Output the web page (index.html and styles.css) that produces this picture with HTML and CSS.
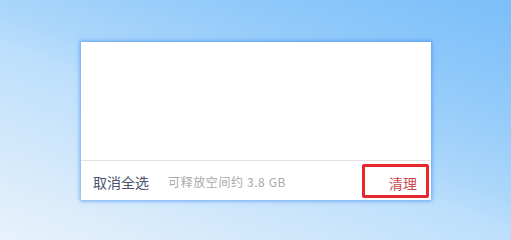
FILE: index.html
```html
<!DOCTYPE html>
<html lang="zh-CN">
<head>
    <meta charset="UTF-8">
    <meta name="viewport" content="width=device-width, initial-scale=1.0">
    <title>清理</title>
    <link rel="stylesheet" href="styles.css">
</head>
<body>

    <!-- 面板 -->
    <div class="panel">
        <div class="panel-body"></div>

        <!-- 底部操作栏 -->
        <div class="panel-footer">
            <span class="deselect">取消全选</span>
            <span class="space-info">可释放空间约 3.8 GB</span>
            <div class="clean-btn">清理</div>
        </div>
    </div>

</body>
</html>
```

FILE: styles.css
```css
body {
    margin: 0;
    width: 511px;
    height: 240px;
    overflow: hidden;
    padding: 42px 0 0 81px;
    box-sizing: border-box;
    font-family: 'Noto Sans CJK SC', 'Noto Sans', sans-serif;
    background:
        linear-gradient(200deg, rgba(118, 188, 249, 0.9) 0%, rgba(118, 188, 249, 0) 55%),
        linear-gradient(20deg, #e8f2fb 0%, #b4dbfb 55%, #a6d3fa 100%);
}

/* 面板 */
.panel {
    width: 350px;
    height: 158px;
    background-color: #fff;
    display: flex;
    flex-direction: column;
    box-shadow: 0 0 4px 1px rgba(60, 140, 245, 0.7);
}

.panel-body {
    height: 118px;
    border-bottom: 1px solid #e2e2e2;
}

/* 底部操作栏 */
.panel-footer {
    flex: 1;
    display: flex;
    align-items: center;
    padding-left: 12px;
    padding-right: 2px;
    padding-top: 2px;
}

.deselect {
    font-size: 14px;
    color: #4b546e;
}

.space-info {
    font-size: 12px;
    color: #a9a9a9;
    margin-left: 19px;
    letter-spacing: 0.6px;
}

.clean-btn {
    margin-left: auto;
    margin-top: -1px;
    width: 67px;
    height: 34px;
    box-sizing: border-box;
    border: 3px solid #e8262e;
    border-radius: 2px;
    display: flex;
    align-items: center;
    justify-content: flex-end;
    padding-right: 9px;
    padding-top: 4px;
    font-size: 14px;
    color: #c94a4f;
}
```
